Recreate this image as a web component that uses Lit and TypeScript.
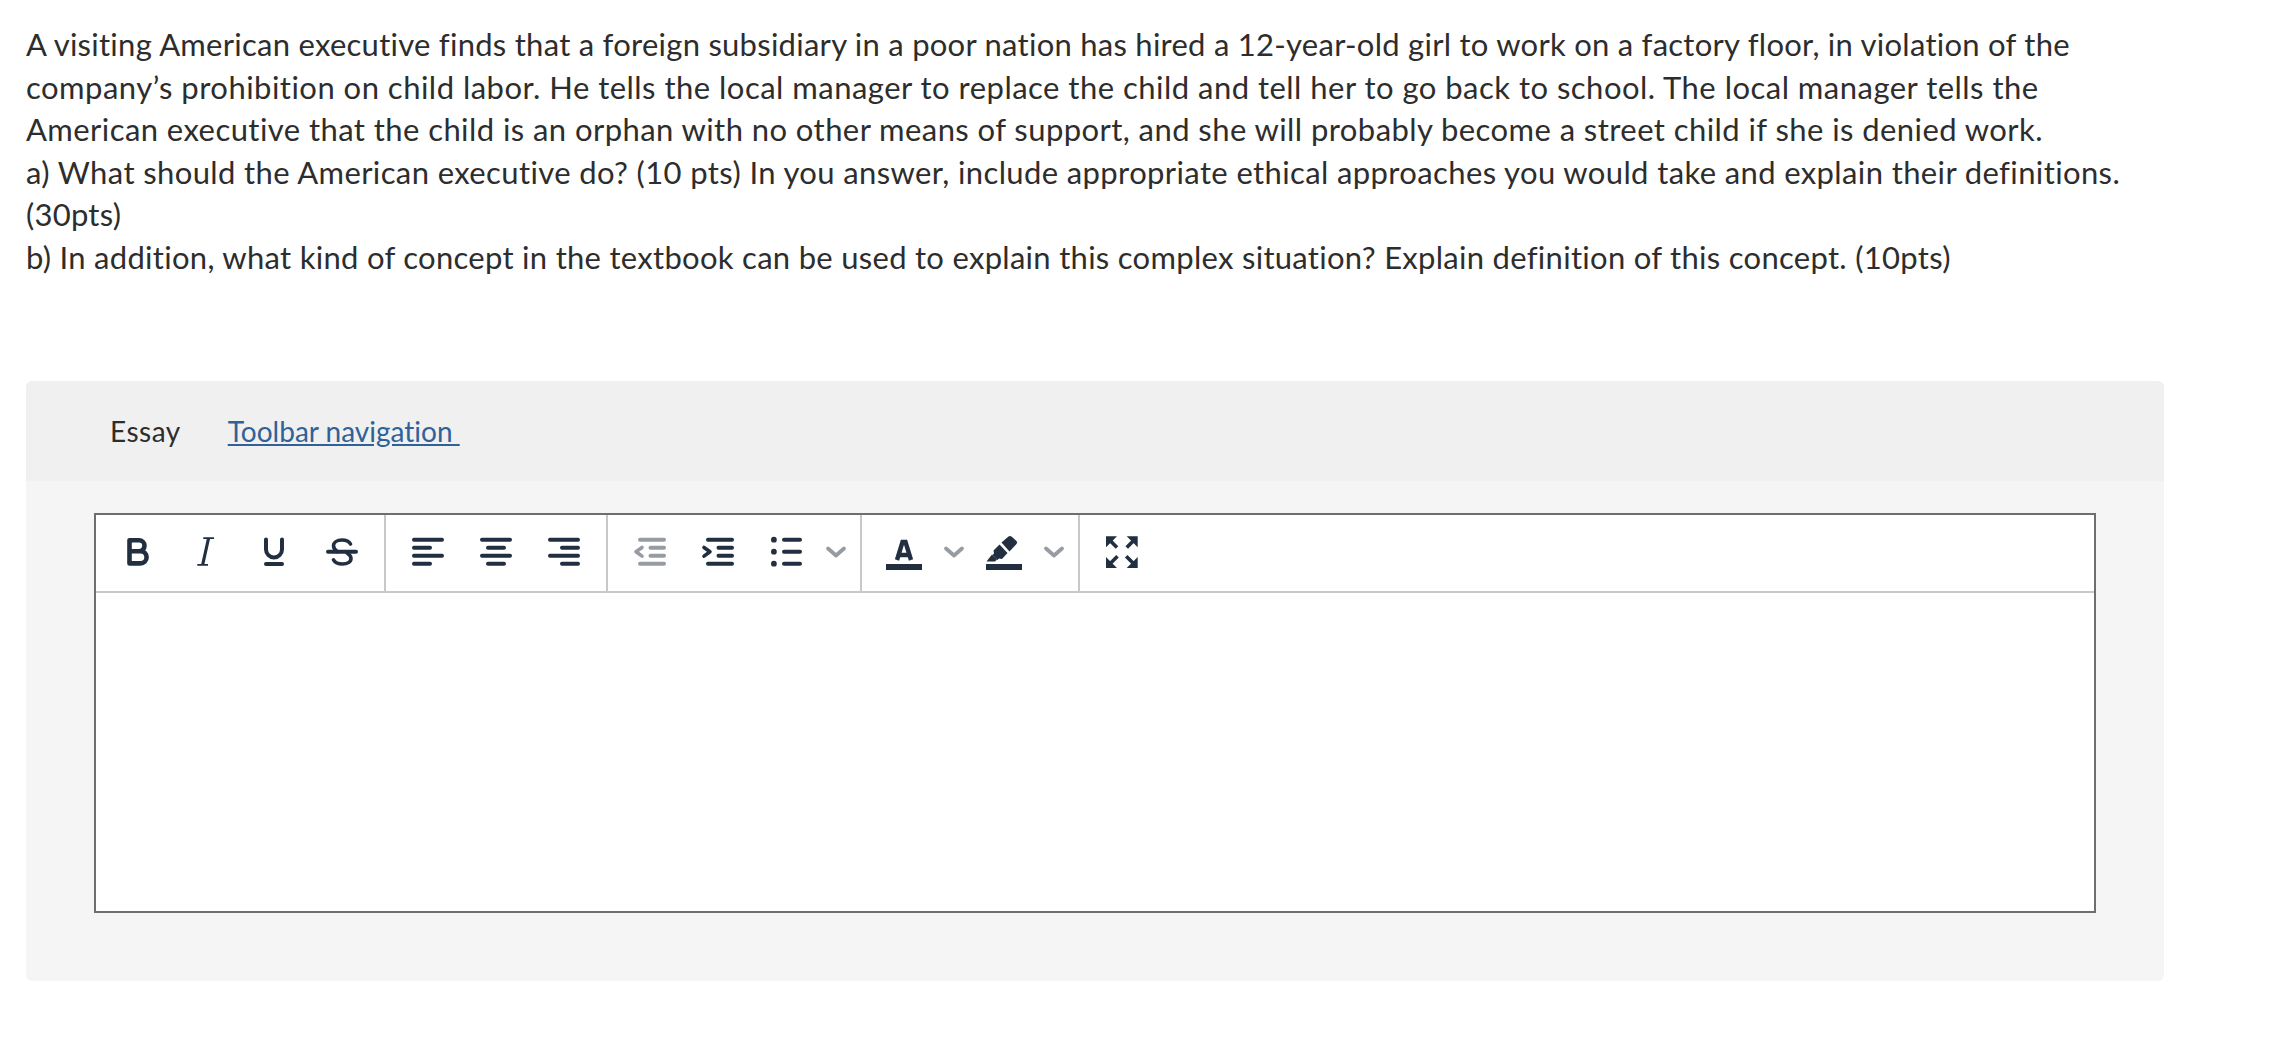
import { LitElement, html, css, svg } from "lit";
import { customElement } from "lit/decorators.js";

const ic = (body: unknown) => html`<svg class="ic" viewBox="0 0 48 48" width="48" height="48" aria-hidden="true">${body}</svg>`;

const rows = (a: number[], b: number[]) => {
  const ys = [10.7, 18.7, 26.7, 34.7];
  const d = ys.map((y, i) => { const r = i % 2 ? b : a; return `M${r[0]} ${y}H${r[1]}`; }).join("");
  return svg`<path class="s" stroke-width="4" stroke-linecap="round" d=${d}/>`;
};

const bold = svg`<path class="s" stroke-width="4.6" stroke-linejoin="round" d="M15.500 11.200h9.500a5.500 5.500 0 0 1 0 11H15.500zM15.500 22.200h11a6.100 6.100 0 0 1 0 12.200h-11z"/>`;
const italic = svg`<path class="s" stroke-width="1.800" d="M21.300 9.200H32M15.300 35.800H26"/><path class="f" d="M25 9h3.200L22.200 36H19z"/>`;
const under = svg`<path class="s" stroke-width="4" stroke-linecap="round" d="M16 10.500v10a8 8 0 0 0 16 0v-10"/><path class="s" stroke-width="4" stroke-linecap="round" d="M16 35h16"/>`;
const strike = svg`<path class="s" stroke-width="3.600" stroke-linecap="round" d="M32.500 15c-1.500-2.800-4.800-4-8.500-4-5 0-8.500 2.400-8.500 5.800 0 2.500 1.600 4.300 4 5.900M29 24c2.500 1.500 4 3.200 4 5.500 0 3.500-3.800 5.500-8.500 5.500-4 0-7.500-1.400-9-4.200"/><path class="s" stroke-width="4" stroke-linecap="round" d="M10 22.700h28"/>`;
const alignL = rows([10, 38], [10, 26]);
const alignC = rows([10, 38], [16, 32]);
const alignR = rows([10, 38], [22, 38]);
const outdent = svg`<path class="s muted" stroke-width="4" stroke-linecap="round" d="M14 10.700h24M24.500 18.700H38M24.500 26.700H38M14 34.700h24"/><path class="s muted" stroke-width="3.600" stroke-linecap="round" stroke-linejoin="round" d="M16 18.500l-6 4.300 6 4.300"/>`;
const indent = svg`<path class="s" stroke-width="4" stroke-linecap="round" d="M14 10.700h24M24.500 18.700H38M24.500 26.700H38M14 34.700h24"/><path class="s" stroke-width="3.600" stroke-linecap="round" stroke-linejoin="round" d="M10 18.500l6 4.300-6 4.300"/>`;
const list = svg`<path class="s" stroke-width="4" stroke-linecap="round" d="M22 10.700h16M22 22.700h16M22 34.700h16"/><g class="f"><circle cx="11.900" cy="10.700" r="2.900"/><circle cx="11.900" cy="22.700" r="2.900"/><circle cx="11.900" cy="34.700" r="2.900"/></g>`;
const chevron = svg`<path class="s muted" stroke-width="3.800" stroke-linecap="round" stroke-linejoin="round" d="M16 19.500l8 7 8-7"/>`;
const textColor = svg`<path class="s" stroke-width="4.4" stroke-linejoin="miter" d="M17 31l5.500-18h3L31 31M19 26h10"/><rect class="f" x="6" y="35" width="36" height="6"/>`;
const marker = svg`<g class="f"><rect x="6" y="35" width="36" height="6"/><path d="M21.500 13.500L28.500 7.500q1.500-1.200 3 0l5 4.500q1.300 1.500 0 3L29.500 22.500z"/><path d="M19.500 15.500L27.500 24 22 30l-3-.5-1.500 1.500-5-5 1.500-1.500-.5-3z"/><path d="M12 25.500l5 5-2 2H6.500z"/></g>`;
const full = svg`<g class="f"><path d="M8 7.300h11l-11 11zM39.700 7.300h-11l11 11zM8 39h11L8 28zM39.700 39h-11l11-11z"/></g><path class="s" stroke-width="3.600" d="M11 10.500L19 18.500M36.700 10.500L28.700 18.500M11 35.800L19.500 27.300M36.700 35.800L28.200 27.300"/>`;

@customElement("app-root")
export class AppRoot extends LitElement {
  static styles = css`
    :host { display: block; font-family: "Lato", "Liberation Sans", sans-serif; color: #2d2d2d; font-variant-ligatures: none; }
    .question { padding: 23px 26px 0; font-size: 31px; line-height: 42.600px; height: 381px; box-sizing: border-box; }
    .question div { white-space: nowrap; }
    .l1 { letter-spacing: 0.26px; }
    .l2 { letter-spacing: 0.48px; }
    .l3 { letter-spacing: 0.43px; }
    .l4 { letter-spacing: 0.38px; }
    .l5 { letter-spacing: 0.24px; }
    .l6 { letter-spacing: 0.29px; }
    .card { margin: 0 108px 0 26px; background: #f5f5f5; border-radius: 6px; overflow: hidden; height: 600px; }
    .head { height: 100px; background: #f0f0f0; display: flex; align-items: center; gap: 47px; padding-left: 84px; font-size: 28px; }
    .head span { letter-spacing: 0.5px; }
    .head a { color: #2f6299; text-decoration: underline; white-space: pre; }
    .editor { margin: 32px 68px 0; border: 2px solid #6e6e6e; background: #fff; height: 400px; box-sizing: border-box; }
    .toolbar { display: flex; height: 78px; box-sizing: border-box; border-bottom: 2px solid #c8c8c8; }
    .group { display: flex; padding: 0 8px; border-right: 2px solid #c8c8c8; }
    .group.last { border-right: 0; }
    .btn { width: 68px; height: 76px; display: flex; align-items: center; justify-content: center; }
    .btn.small { width: 32px; }
    .ic { display: block; flex: none; fill: none; }
    .s { stroke: #212f40; fill: none; }
    .f { fill: #212f40; }
    .s.muted { stroke: #979ca3; }
  `;

  render() {
    const btn = (b: unknown) => html`<div class="btn">${ic(b)}</div>`;
    const small = (b: unknown) => html`<div class="btn small">${ic(b)}</div>`;
    return html`
      <div class="question">
        <div class="l1">A visiting American executive finds that a foreign subsidiary in a poor nation has hired a 12-year-old girl to work on a factory floor, in violation of the</div>
        <div class="l2">company’s prohibition on child labor. He tells the local manager to replace the child and tell her to go back to school. The local manager tells the</div>
        <div class="l3">American executive that the child is an orphan with no other means of support, and she will probably become a street child if she is denied work.</div>
        <div class="l4">a) What should the American executive do? (10 pts) In you answer, include appropriate ethical approaches you would take and explain their definitions.</div>
        <div class="l5">(30pts)</div>
        <div class="l6">b) In addition, what kind of concept in the textbook can be used to explain this complex situation? Explain definition of this concept. (10pts)</div>
      </div>
      <div class="card">
        <div class="head"><span>Essay</span><a href="#">Toolbar navigation </a></div>
        <div class="editor">
          <div class="toolbar">
            <div class="group">${btn(bold)}${btn(italic)}${btn(under)}${btn(strike)}</div>
            <div class="group">${btn(alignL)}${btn(alignC)}${btn(alignR)}</div>
            <div class="group">${btn(outdent)}${btn(indent)}${btn(list)}${small(chevron)}</div>
            <div class="group">${btn(textColor)}${small(chevron)}${btn(marker)}${small(chevron)}</div>
            <div class="group last">${btn(full)}</div>
          </div>
        </div>
      </div>
    `;
  }
}
